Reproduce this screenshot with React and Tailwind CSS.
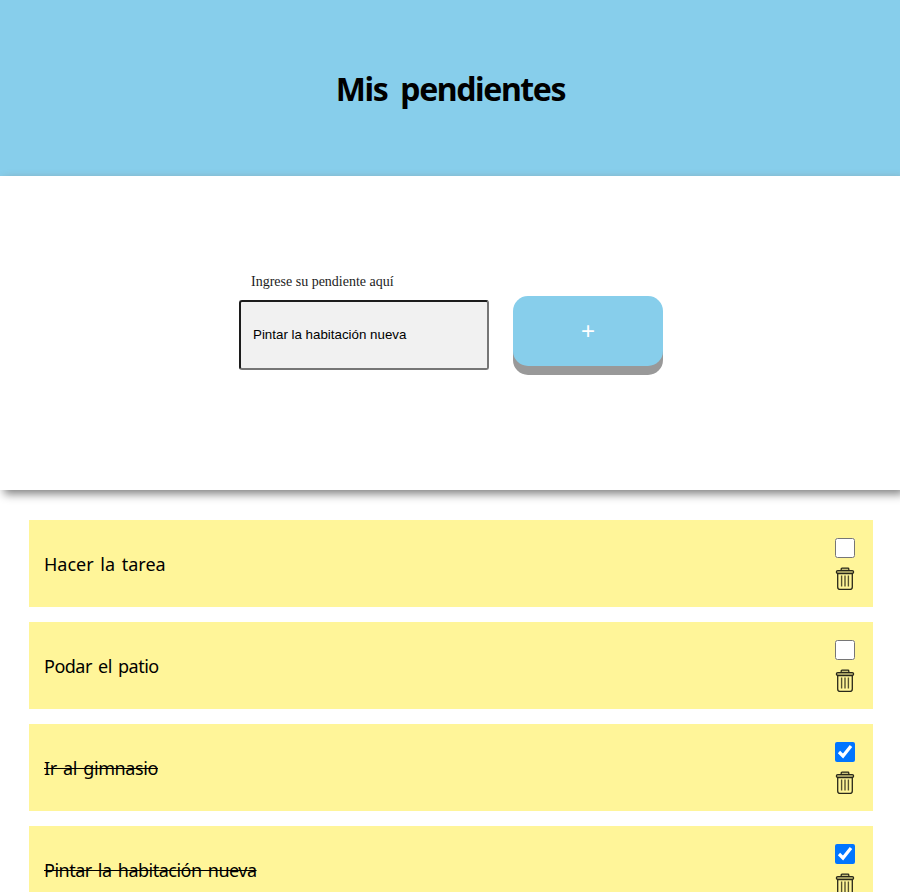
const items = [
  { text: 'Hacer la tarea', done: false, spacing: 'tracking-[0px] [word-spacing:2px]' },
  { text: 'Podar el patio', done: false, spacing: 'tracking-[-0.5px] [word-spacing:2px]' },
  { text: 'Ir al gimnasio', done: true, spacing: 'tracking-[-0.4px] [word-spacing:2px]' },
  { text: 'Pintar la habitación nueva', done: true, spacing: 'tracking-[-0.5px] [word-spacing:2px]' },
];

function Trash() {
  return (
    <svg width="20" height="24" viewBox="0 0 20 24" fill="none" stroke="#29281a" strokeWidth="1.3" strokeLinejoin="round">
      <path d="M6.2 3.6V2Q6.2 1.2 7 1.2H13Q13.8 1.2 13.8 2V3.6" fill="#c8c079" />
      <rect x="1.4" y="3.7" width="17.2" height="2.8" rx="1.4" fill="#c8c079" />
      <path d="M2.7 6.5V19.9Q2.7 22.4 5.2 22.4H14.8Q17.3 22.4 17.3 19.9V6.5" />
      <path d="M6.6 8.6V19.4M10 8.6V19.4M13.4 8.6V19.4" stroke="#57532f" strokeWidth="1.4" />
    </svg>
  );
}

function Item({ text, done, spacing }) {
  return (
    <li className="flex h-[87px] items-center justify-between bg-[#fff599] pl-[15px] pr-[18px]">
      <span className={`whitespace-nowrap pt-px font-['Comic_Sans_MS','Noto_Sans',sans-serif] text-[18px] leading-6 ${spacing} ${done ? 'line-through decoration-1' : ''}`}>
        {text}
      </span>
      <div className="flex flex-col items-center gap-[9px] pt-px">
        <input type="checkbox" defaultChecked={done} className="block size-5" />
        <Trash />
      </div>
    </li>
  );
}

export default function App() {
  return (
    <div className="h-[892px] overflow-hidden bg-white text-black">
      <header className="flex h-44 items-center justify-center bg-[#87ceeb]">
        <h1 className="whitespace-nowrap pl-px pt-0.5 font-['Comic_Sans_MS','Noto_Sans',sans-serif] text-[32px] font-bold tracking-[-1.4px] [word-spacing:6px]">Mis pendientes</h1>
      </header>
      <section className="relative flex h-[314px] items-start gap-6 bg-white pl-[239px] pt-24 shadow-[4px_4px_9px_#808080]">
        <div className="flex w-[250px] flex-col">
          <label htmlFor="pendiente" className="h-7 pl-3 font-['Liberation_Serif',serif] text-[14px] leading-5 text-[#1c1c1c]">
            Ingrese su pendiente aquí
          </label>
          <input
            id="pendiente"
            defaultValue="Pintar la habitación nueva"
            className="h-[70px] w-[250px] rounded-[3px] border-2 border-b-[#767676] border-l-[#1c1c1c] border-r-[#767676] border-t-[#1c1c1c] bg-[#f1f1f1] px-3 pb-0.5 font-['Liberation_Sans',sans-serif] text-[13.33px]"
          />
        </div>
        <button className="mt-6 h-[70px] w-[150px] rounded-[15px] bg-[#87ceeb] font-['Liberation_Sans',sans-serif] text-[24px] text-white shadow-[0_9px_#999]">
          +
        </button>
      </section>
      <ul className="flex flex-col gap-[15px] pl-[29px] pr-[27px] pt-[30px]">
        {items.map((item) => (
          <Item key={item.text} {...item} />
        ))}
      </ul>
    </div>
  );
}
